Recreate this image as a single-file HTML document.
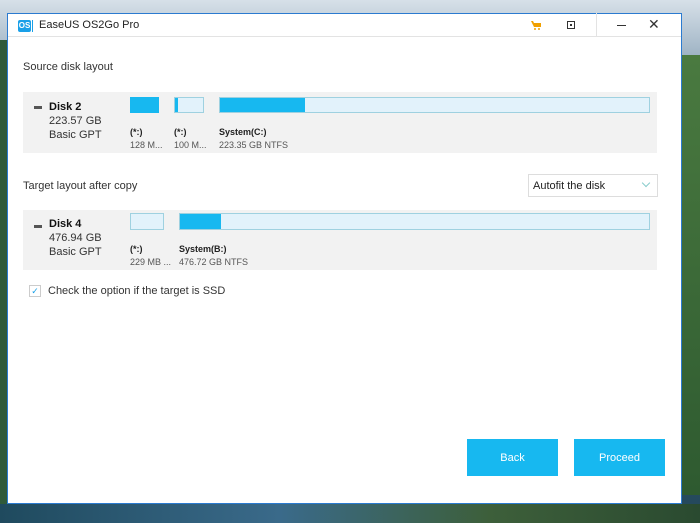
<!DOCTYPE html>
<html><head><meta charset="utf-8"><style>
*{margin:0;padding:0;box-sizing:border-box}
body{width:700px;height:523px;overflow:hidden;position:relative;font-family:"Liberation Sans",sans-serif;
background:linear-gradient(180deg,#b9c9d6 0%,#8fa7b8 8%,#3e6a3a 20%,#2e5530 60%,#2a4f5a 85%,#23475e 100%);}
.a{position:absolute}
.win{left:7px;top:13px;width:675px;height:491px;background:#fff;border:1px solid #2b7bd0}
.t{font-size:11px;color:#333;white-space:nowrap}
.panel{background:#f2f2f2}
.bar{border:1px solid #9fd1e0;background:#e2f2fb}
.fill{background:#17b8f0}
.b{font-weight:bold;font-size:9px;color:#222}
.s{font-size:9px;color:#555}
.btn{background:#17b8f0;color:#fff;font-size:11px;text-align:center;line-height:39px}
</style></head><body>
<div class="a" style="left:0;top:0;width:700px;height:60px;background:linear-gradient(180deg,#d7e0e8,#9ab0c2)"></div>
<div class="a" style="left:682px;top:55px;width:18px;height:440px;background:linear-gradient(180deg,#4a7a40,#2e5a30)"></div>
<div class="a" style="left:0;top:40px;width:8px;height:480px;background:#2f5a3a"></div>
<div class="a" style="left:0;top:504px;width:700px;height:19px;background:linear-gradient(90deg,#1f4a5e,#3a6a8a 40%,#3d5f3a 70%,#2a4a30)"></div>
<div class="a win"></div>
<div class="a" style="left:8px;top:36px;width:673px;height:1px;background:#e3e3e3"></div>
<div class="a" style="left:18px;top:20px;width:13px;height:12px;background:#1aa0e8;border-radius:2px;color:#fff;font-size:8px;font-weight:bold;line-height:12px;text-align:center">OS</div>
<div class="a" style="left:32px;top:20px;width:1px;height:12px;background:#1aa0e8"></div>
<div class="a t" style="left:39px;top:19px;font-size:11px;color:#222">EaseUS OS2Go Pro</div>
<svg class="a" style="left:530px;top:20px" width="12" height="11"><path d="M1 1h2l1 2h7v4H4z" fill="#f0a000"/><circle cx="5" cy="9" r="1" fill="#f0a000"/><circle cx="9" cy="9" r="1" fill="#f0a000"/></svg>
<div class="a" style="left:567px;top:21px;width:8px;height:8px;border:1px solid #333"><div style="margin:2px;width:2px;height:2px;background:#333"></div></div>
<div class="a" style="left:596px;top:13px;width:1px;height:23px;background:#e3e3e3"></div>
<div class="a" style="left:617px;top:25px;width:9px;height:1px;background:#333"></div>
<div class="a" style="left:648px;top:16px;font-size:14px;color:#333">✕</div>

<div class="a t" style="left:23px;top:61px">Source disk layout</div>
<div class="a panel" style="left:23px;top:92px;width:634px;height:61px"></div>
<div class="a" style="left:34px;top:106px;width:8px;height:3px;background:#555"></div>
<div class="a t" style="left:49px;top:101px;font-weight:bold;color:#111">Disk 2</div>
<div class="a t" style="left:49px;top:115px">223.57 GB</div>
<div class="a t" style="left:49px;top:129px">Basic GPT</div>
<div class="a fill" style="left:130px;top:97px;width:29px;height:16px"></div>
<div class="a bar" style="left:174px;top:97px;width:30px;height:16px"><div class="fill" style="width:3px;height:14px"></div></div>
<div class="a bar" style="left:219px;top:97px;width:431px;height:16px"><div class="fill" style="width:85px;height:14px"></div></div>
<div class="a b" style="left:130px;top:127px">(*:)</div><div class="a s" style="left:130px;top:140px">128 M...</div>
<div class="a b" style="left:174px;top:127px">(*:)</div><div class="a s" style="left:174px;top:140px">100 M...</div>
<div class="a b" style="left:219px;top:127px">System(C:)</div><div class="a s" style="left:219px;top:140px">223.35 GB NTFS</div>

<div class="a t" style="left:23px;top:180px">Target layout after copy</div>
<div class="a" style="left:528px;top:174px;width:130px;height:23px;border:1px solid #ddd"></div>
<div class="a t" style="left:533px;top:180px;color:#222">Autofit the disk</div>
<div class="a" style="left:643px;top:180px;width:6px;height:6px;border-right:1px solid #8cc;border-bottom:1px solid #8cc;transform:rotate(45deg)"></div>

<div class="a panel" style="left:23px;top:210px;width:634px;height:60px"></div>
<div class="a" style="left:34px;top:225px;width:8px;height:3px;background:#555"></div>
<div class="a t" style="left:49px;top:218px;font-weight:bold;color:#111">Disk 4</div>
<div class="a t" style="left:49px;top:232px">476.94 GB</div>
<div class="a t" style="left:49px;top:246px">Basic GPT</div>
<div class="a bar" style="left:130px;top:213px;width:34px;height:17px"></div>
<div class="a bar" style="left:179px;top:213px;width:471px;height:17px"><div class="fill" style="width:41px;height:15px"></div></div>
<div class="a b" style="left:130px;top:244px">(*:)</div><div class="a s" style="left:130px;top:257px">229 MB ...</div>
<div class="a b" style="left:179px;top:244px">System(B:)</div><div class="a s" style="left:179px;top:257px">476.72 GB NTFS</div>

<div class="a" style="left:29px;top:285px;width:12px;height:12px;border:1px solid #ccc;color:#1aa0e8;font-size:9px;line-height:10px;text-align:center">✓</div>
<div class="a t" style="left:48px;top:285px">Check the option if the target is SSD</div>

<div class="a btn" style="left:467px;top:439px;width:91px;height:37px">Back</div>
<div class="a btn" style="left:574px;top:439px;width:91px;height:37px">Proceed</div>
</body></html>
